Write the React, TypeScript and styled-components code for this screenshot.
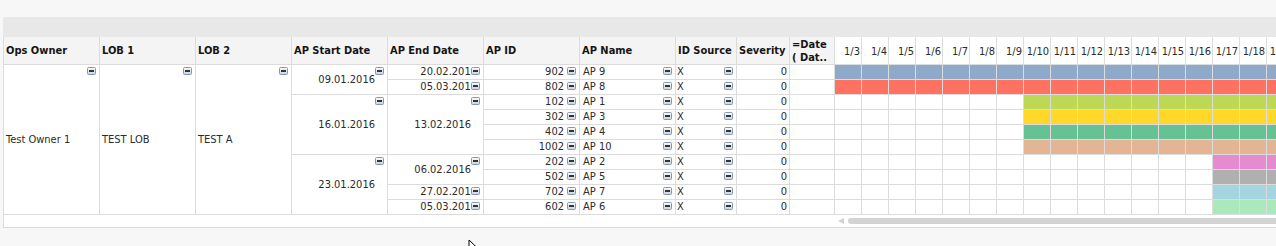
import React from 'react';
import styled, { createGlobalStyle } from 'styled-components';

const GlobalStyle = createGlobalStyle`
  html, body {
    margin: 0;
    padding: 0;
    background: #f7f7f7;
    overflow: hidden;
  }
  body {
    font-family: "DejaVu Sans Condensed", "DejaVu Sans", sans-serif;
    font-stretch: condensed;
    font-size: 11px;
    color: #2b2b2b;
  }
`;

const DATES = Array.from({ length: 18 }, (_, i) => `1/${i + 3}`);

type Row = { id: string; name: string; color: string; start: number };
const ROWS: Row[] = [
  { id: '902', name: 'AP 9', color: '#8eaacb', start: 0 },
  { id: '802', name: 'AP 8', color: '#ff7262', start: 0 },
  { id: '102', name: 'AP 1', color: '#bcd854', start: 7 },
  { id: '302', name: 'AP 3', color: '#ffd82a', start: 7 },
  { id: '402', name: 'AP 4', color: '#66c295', start: 7 },
  { id: '1002', name: 'AP 10', color: '#e4b594', start: 7 },
  { id: '202', name: 'AP 2', color: '#e68bcf', start: 14 },
  { id: '502', name: 'AP 5', color: '#b0b0b0', start: 14 },
  { id: '702', name: 'AP 7', color: '#a4d5e1', start: 14 },
  { id: '602', name: 'AP 6', color: '#abe8bc', start: 14 },
];

// AP start / end dates keyed by the row index where a merged block begins
const START_BLOCKS: Record<number, { text: string; span: number }> = {
  0: { text: '09.01.2016', span: 2 },
  2: { text: '16.01.2016', span: 4 },
  6: { text: '23.01.2016', span: 4 },
};
const END_BLOCKS: Record<number, { text: string; span: number }> = {
  0: { text: '20.02.2016', span: 1 },
  1: { text: '05.03.2016', span: 1 },
  2: { text: '13.02.2016', span: 4 },
  6: { text: '06.02.2016', span: 2 },
  8: { text: '27.02.2016', span: 1 },
  9: { text: '05.03.2016', span: 1 },
};

const Page = styled.div`
  position: relative;
  width: 1276px;
  height: 246px;
  overflow: hidden;
  padding: 17px 0 0 3px;
  box-sizing: border-box;
`;

const Table = styled.div`
  width: max-content;
  display: flex;
  flex-direction: column;
`;

const Band = styled.div`
  height: 20px;
  background: #e8e8e8;
`;

const Grid = styled.div`
  display: grid;
  grid-template-columns: repeat(7, 95px) 60px 52px 44px repeat(${DATES.length}, 26px);
  grid-template-rows: 27px repeat(10, 14px);
  gap: 1px;
  background: #dcdcdc;
  border-left: 1px solid #dcdcdc;
  border-bottom: 1px solid #dcdcdc;
`;

const HeaderCell = styled.div<{ $twoLine?: boolean }>`
  background: #f4f4f4;
  font-weight: bold;
  color: #161616;
  padding: 0 2px;
  display: flex;
  align-items: ${(p) => (p.$twoLine ? 'flex-start' : 'center')};
  line-height: 13px;
  padding-top: ${(p) => (p.$twoLine ? '1px' : '0')};
  white-space: pre;
  overflow: hidden;
`;

const DateHeader = styled.div`
  background: #ffffff;
  display: flex;
  align-items: center;
  justify-content: flex-end;
  padding: 2px 1px 0 0;
  color: #2b2b2b;
  white-space: nowrap;
`;

const Cell = styled.div<{
  $span?: number;
  $align?: 'left' | 'right';
  $pl?: number;
  $pr?: number;
}>`
  position: relative;
  grid-row: span ${(p) => p.$span ?? 1};
  background: #ffffff;
  display: flex;
  align-items: center;
  justify-content: ${(p) => (p.$align === 'right' ? 'flex-end' : 'flex-start')};
  padding-left: ${(p) => p.$pl ?? 2}px;
  padding-right: ${(p) => p.$pr ?? 2}px;
  line-height: 14px;
  white-space: nowrap;
  overflow: hidden;
`;

const GanttCell = styled.div<{ $color?: string }>`
  background: ${(p) => p.$color ?? '#ffffff'};
`;

const IconWrap = styled.span`
  position: absolute;
  top: 2px;
  right: 3px;
  width: 9px;
  height: 8px;
  display: block;
  line-height: 0;
`;

const ScrollRow = styled.div`
  height: 12px;
  background: #ffffff;
  border-left: 1px solid #dcdcdc;
  border-bottom: 1px solid #dcdcdc;
  display: flex;
  align-items: center;
  padding-left: 834px;
`;

const ScrollArrow = styled.span`
  width: 0;
  height: 0;
  border-top: 3px solid transparent;
  border-bottom: 3px solid transparent;
  border-right: 6px solid #d2d2d2;
  margin-right: 4px;
`;

const ScrollThumb = styled.div`
  flex: 1;
  height: 6px;
  border-radius: 3px;
  background: #d3d3d3;
`;

const Cursor = styled.svg`
  position: absolute;
  left: 468px;
  top: 239px;
`;

const MinusIcon: React.FC = () => (
  <IconWrap>
    <svg width="9" height="8" viewBox="0 0 9 8">
      <defs>
        <linearGradient id="mi-grad" x1="0" y1="0" x2="0" y2="1">
          <stop offset="0" stopColor="#fbfcfd" />
          <stop offset="1" stopColor="#c9d1da" />
        </linearGradient>
      </defs>
      <rect x="0.5" y="0.5" width="8" height="7" rx="1" fill="url(#mi-grad)" stroke="#8499b0" />
      <rect x="2" y="3" width="5" height="2" fill="#333333" />
    </svg>
  </IconWrap>
);

const HEADERS = [
  'Ops Owner',
  'LOB 1',
  'LOB 2',
  'AP Start Date',
  'AP End Date',
  'AP ID',
  'AP Name',
  'ID Source',
  'Severity',
];

export default function App() {
  const cells: React.ReactNode[] = [];

  HEADERS.forEach((h) => cells.push(<HeaderCell key={`h-${h}`}>{h}</HeaderCell>));
  cells.push(
    <HeaderCell key="h-date" $twoLine>
      {'=Date\n( Dat..'}
    </HeaderCell>
  );
  DATES.forEach((d) => cells.push(<DateHeader key={`dh-${d}`}>{d}</DateHeader>));

  ROWS.forEach((r, i) => {
    if (i === 0) {
      cells.push(
        <Cell key="owner" $span={10}>
          Test Owner 1
          <MinusIcon />
        </Cell>,
        <Cell key="lob1" $span={10}>
          TEST LOB
          <MinusIcon />
        </Cell>,
        <Cell key="lob2" $span={10}>
          TEST A
          <MinusIcon />
        </Cell>
      );
    }
    const sb = START_BLOCKS[i];
    if (sb) {
      cells.push(
        <Cell key={`s-${i}`} $span={sb.span} $align="right" $pr={12}>
          {sb.text}
          <MinusIcon />
        </Cell>
      );
    }
    const eb = END_BLOCKS[i];
    if (eb) {
      cells.push(
        <Cell key={`e-${i}`} $span={eb.span} $align="right" $pr={eb.span > 1 ? 12 : 6}>
          {eb.text}
          <MinusIcon />
        </Cell>
      );
    }
    cells.push(
      <Cell key={`id-${i}`} $align="right" $pr={15}>
        {r.id}
        <MinusIcon />
      </Cell>,
      <Cell key={`n-${i}`} $pl={3}>
        {r.name}
        <MinusIcon />
      </Cell>,
      <Cell key={`src-${i}`} $pl={1}>
        X
        <MinusIcon />
      </Cell>,
      <Cell key={`sev-${i}`} $align="right" $pr={2}>
        0
      </Cell>,
      <Cell key={`dc-${i}`} />
    );
    DATES.forEach((d, j) =>
      cells.push(<GanttCell key={`g-${i}-${d}`} $color={j >= r.start ? r.color : undefined} />)
    );
  });

  return (
    <>
      <GlobalStyle />
      <Page>
        <Table>
          <Band />
          <Grid>{cells}</Grid>
          <ScrollRow>
            <ScrollArrow />
            <ScrollThumb />
          </ScrollRow>
        </Table>
        <Cursor width="12" height="19" viewBox="0 0 12 19">
          <path d="M1 1 L1 15 L4.5 11.5 L7 17 L9 16 L6.5 10.5 L11 10.5 Z" fill="#ffffff" stroke="#000000" strokeWidth="1" />
        </Cursor>
      </Page>
    </>
  );
}
